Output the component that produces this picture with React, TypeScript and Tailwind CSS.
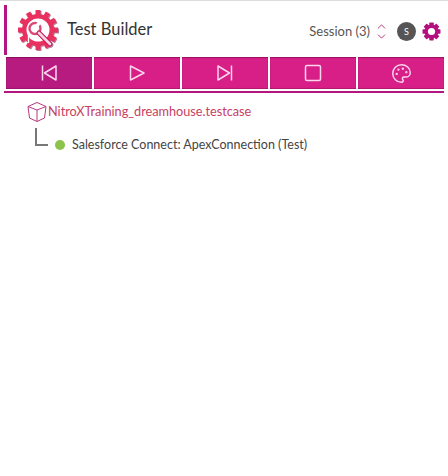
import React from 'react';
import { ChevronUp, ChevronDown, Palette } from 'lucide-react';

function Logo() {
  const teeth = Array.from({ length: 12 }, (_, i) => i * 30);
  return (
    <svg width="42" height="42" viewBox="0 0 42 42" className="drop-shadow-[1px_1px_0.5px_rgba(120,20,70,0.55)]">
      {teeth.map((a) => (
        <rect key={a} x="18.5" y="1" width="5" height="7" fill="#e8315f" transform={`rotate(${a} 21 21)`} />
      ))}
      <circle cx="21" cy="21" r="16" fill="#e8315f" />
      <circle cx="21" cy="21" r="11.5" fill="#ffffff" />
      <circle cx="18" cy="19.5" r="5.5" fill="none" stroke="#d84a78" strokeWidth="2.4" />
      <path d="M11.5 34 V22" stroke="#ffffff" strokeWidth="1.4" />
      <path d="M22 24 L33 35" stroke="#c2185b" strokeWidth="5" strokeLinecap="round" />
      <path d="M22 24 L33 35" stroke="#f8d5e0" strokeWidth="2.8" strokeLinecap="round" />
      <path d="M20 17 L24 11" stroke="#ffffff" strokeWidth="3.4" />
    </svg>
  );
}

function Gear() {
  const teeth = Array.from({ length: 8 }, (_, i) => i * 45);
  return (
    <svg width="19" height="19" viewBox="0 0 19 19" className="ml-[6px]">
      {teeth.map((a) => (
        <rect key={a} x="7.25" y="0.5" width="4.5" height="5" rx="0.8" fill="#b3107f" transform={`rotate(${a} 9.5 9.5)`} />
      ))}
      <circle cx="9.5" cy="9.5" r="7" fill="#b3107f" />
      <circle cx="9.5" cy="9.5" r="3.6" fill="#ffffff" />
    </svg>
  );
}

function PrevIcon() {
  return (
    <svg width="18" height="18" viewBox="0 0 18 18" fill="none" stroke="currentColor" strokeWidth="1.5" strokeLinejoin="round">
      <path d="M2.5 1.5 V16.5" />
      <path d="M16 2 V16 L4.5 9 Z" />
    </svg>
  );
}

function PlayIcon() {
  return (
    <svg width="18" height="18" viewBox="0 0 18 18" fill="none" stroke="currentColor" strokeWidth="1.5" strokeLinejoin="round">
      <path d="M2.5 2 V16 L16 9 Z" />
    </svg>
  );
}

function NextIcon() {
  return (
    <svg width="18" height="18" viewBox="0 0 18 18" fill="none" stroke="currentColor" strokeWidth="1.5" strokeLinejoin="round">
      <path d="M15.5 1.5 V16.5" />
      <path d="M2 2 V16 L13.5 9 Z" />
    </svg>
  );
}

function StopIcon() {
  return (
    <svg width="18" height="18" viewBox="0 0 18 18" fill="none" stroke="currentColor" strokeWidth="1.5">
      <rect x="1.5" y="1.5" width="15" height="15" rx="1.5" />
    </svg>
  );
}

function BoxIcon() {
  return (
    <svg width="22" height="22" viewBox="0 0 22 22" fill="none" stroke="#b5397f" strokeWidth="1" strokeLinejoin="round">
      <path d="M11 1.5 L20 5.5 L18.5 17 L11 20.5 L3.5 17 L2 5.5 Z" />
      <path d="M2 5.5 L11 9 L20 5.5" />
      <path d="M11 9 V20.5" />
    </svg>
  );
}

const buttons = [
  { key: 'prev', icon: <PrevIcon />, active: true },
  { key: 'play', icon: <PlayIcon /> },
  { key: 'next', icon: <NextIcon /> },
  { key: 'stop', icon: <StopIcon /> },
  { key: 'theme', icon: <Palette size={21} strokeWidth={1.7} /> },
];

export default function App() {
  return (
    <div className="w-[448px] h-[476px] bg-white border-t border-[#dddddd] pt-1 font-['Lato',sans-serif]">
      <header className="ml-1 mr-[4px] h-[50px] border-l-[3px] border-[#b3177f] flex items-center pl-[10px] pr-[3px]">
        <Logo />
        <h1 className="ml-[8px] -mt-[1px] text-[16.5px] text-[#333333]">Test Builder</h1>
        <div className="ml-auto flex items-center mt-[3px]">
          <span className="mt-[1px] text-[13px] text-[#555555]">Session (3)</span>
          <span className="ml-[5px] flex flex-col text-[#b81b6f]">
            <ChevronUp size={13} strokeWidth={1.6} className="-mb-[3px]" />
            <ChevronDown size={13} strokeWidth={1.6} />
          </span>
          <span className="ml-[9px] w-[19px] h-[19px] rounded-full bg-[#555555] text-white text-[9px] flex items-center justify-center">S</span>
          <Gear />
        </div>
      </header>
      <div className="mt-[2px] ml-[6px] mr-1 flex gap-[2px] h-8">
        {buttons.map((b) => (
          <button
            key={b.key}
            className={`flex-1 flex items-center justify-center text-[#fbd5ec] shadow-[inset_0_1px_1px_rgba(90,0,60,0.5),inset_0_-1px_1px_rgba(90,0,60,0.3)] ${b.active ? 'bg-[#b81b80]' : 'bg-[#d81f87]'}`}
          >
            {b.icon}
          </button>
        ))}
      </div>
      <div className="ml-1 mr-1 mt-[2px] h-[2px] bg-[#b3177f]" />
      <div className="pl-[26px] pt-[8px]">
        <div className="flex items-center h-[22px]">
          <BoxIcon />
          <span className="text-[12.7px] text-[#c8405f]">NitroXTraining_dreamhouse.testcase</span>
        </div>
        <div className="flex items-center mt-[13px] pl-[9px]">
          <span className="w-[13px] h-[18px] -mt-[16px] border-l-2 border-b-2 border-[#777777]" />
          <span className="ml-[7px] w-[10px] h-[10px] rounded-full bg-[#8dc34a]" />
          <span className="ml-[7px] text-[12.5px] text-[#444444]">Salesforce Connect: ApexConnection (Test)</span>
        </div>
      </div>
    </div>
  );
}
